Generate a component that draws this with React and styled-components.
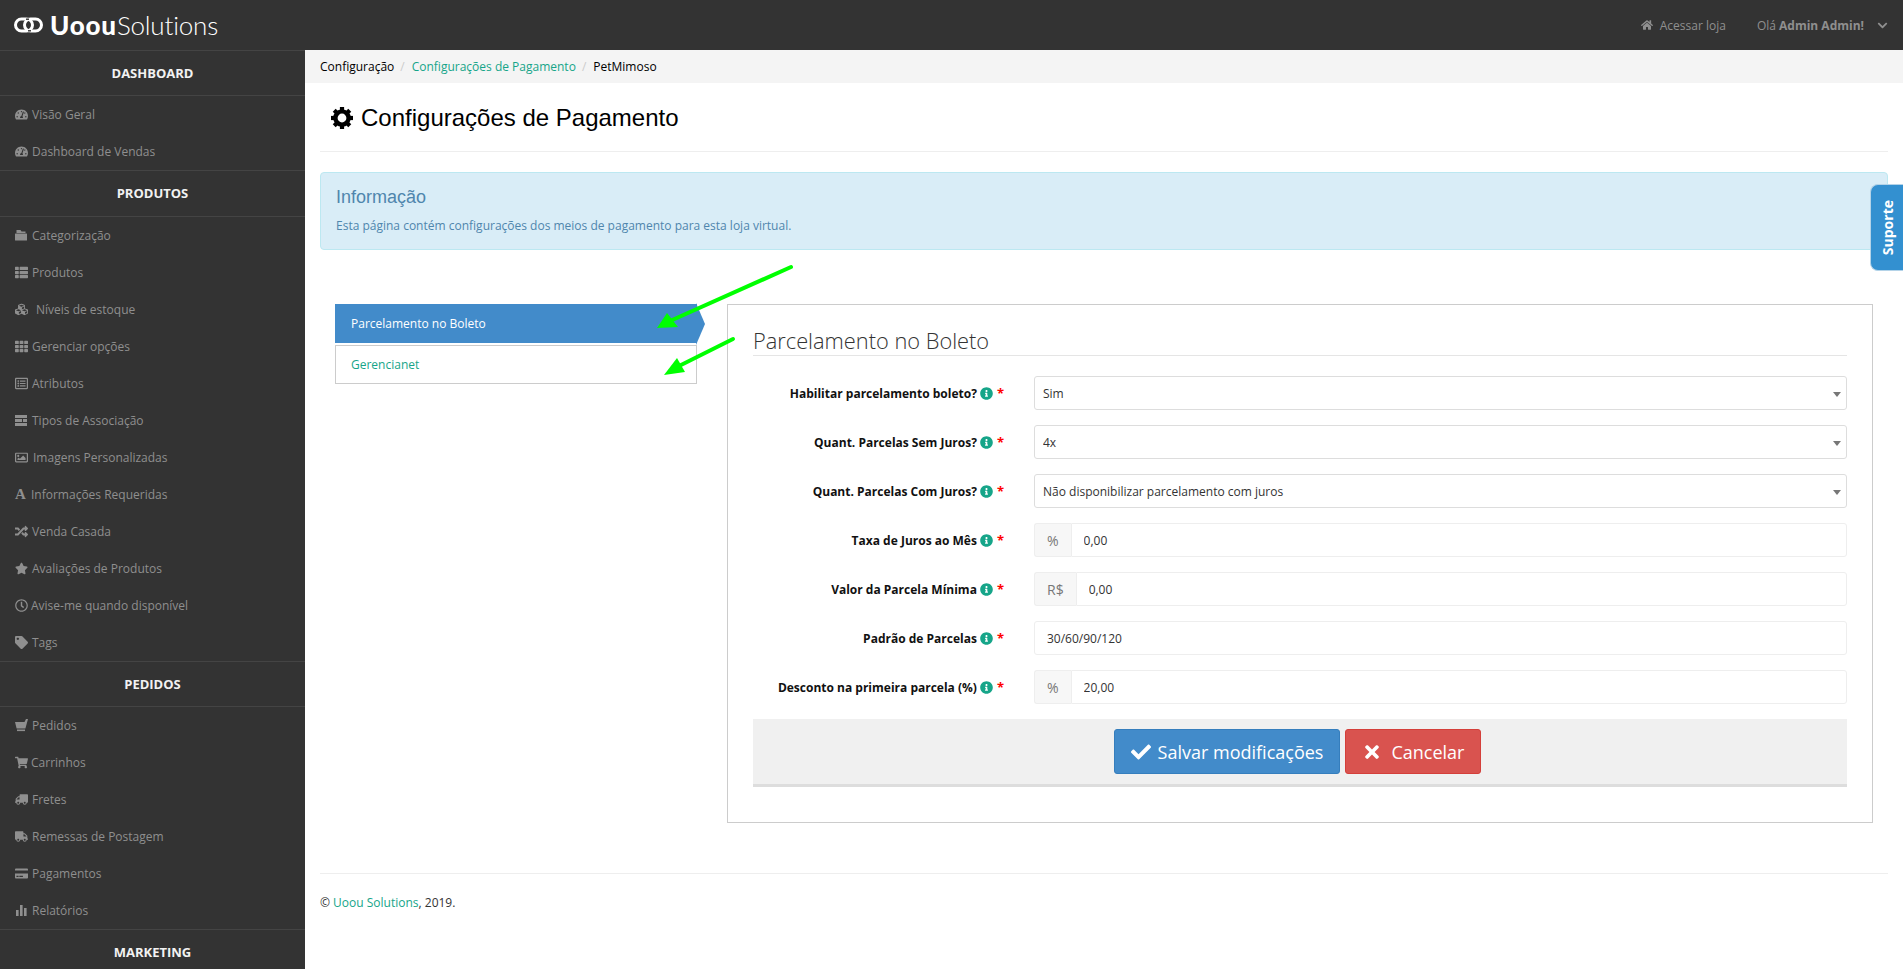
import React from "react";
import styled, { createGlobalStyle } from "styled-components";
import {
  FaTachometerAlt, FaThList, FaCubes, FaTh, FaRegListAlt, FaRegImage, FaRandom,
  FaStar, FaRegClock, FaTag, FaShoppingCart, FaTruck, FaCreditCard, FaHome, FaChevronDown,
  FaCheck, FaTimes, FaInfoCircle
} from "react-icons/fa";

const GlobalStyle = createGlobalStyle`
  html, body { margin: 0; height: 100%; overflow: hidden; background: #fff; }
  body { font-family: "Open Sans", sans-serif; font-size: 12px; color: #333; }
  * { box-sizing: border-box; }
`;

const Page = styled.div`
  position: relative;
  display: flex;
  flex-direction: column;
  height: 100vh;
  overflow: hidden;
`;

const Header = styled.header`
  display: flex;
  align-items: center;
  justify-content: space-between;
  flex: 0 0 50px;
  padding: 0 15px 0 14px;
  background: #333;
`;

const Logo = styled.div`
  display: flex;
  align-items: center;
  color: #fff;
  font-family: Lato, sans-serif;
  font-size: 26px;
  line-height: 50px;
`;

const LogoMark = styled.svg`
  width: 29px;
  height: 16px;
  margin-right: 7px;
`;

const LogoBold = styled.span`
  font-weight: 900;
  letter-spacing: 0.8px;
`;

const LogoThin = styled.span`
  font-weight: 300;
  letter-spacing: -0.2px;
`;

const HeaderLinks = styled.div`
  display: flex;
  align-items: center;
  color: #8f8f8f;
  font-size: 12px;
`;

const StoreLink = styled.span`
  display: flex;
  align-items: center;
  gap: 7px;
  margin-right: 31px;
`;

const UserMenu = styled.span`
  display: flex;
  align-items: center;
  gap: 13px;

  b { font-weight: 700; }
`;

const Body = styled.div`
  display: flex;
  flex: 1;
  min-height: 0;
`;

const Sidebar = styled.nav`
  flex: 0 0 305px;
  background: #333;
  overflow: hidden;
`;

const SectionHead = styled.div`
  display: flex;
  align-items: center;
  justify-content: center;
  height: 46.34px;
  border-top: 1px solid #444;
  border-bottom: 1px solid #444;
  color: #f2f2f2;
  font-size: 13px;
  font-weight: 700;
  text-transform: uppercase;
`;

const SideItem = styled.a`
  display: flex;
  align-items: center;
  height: 37px;
  padding-left: 15px;
  color: #8f8f8f;
  font-size: 12px;
`;

const SideIcon = styled.span`
  display: flex;
  align-items: center;
  flex: 0 0 ${({ $w }) => $w}px;
  margin-right: 3px;
  font-size: 13px;
`;

const SerifGlyph = styled.span`
  font-family: "Liberation Serif", serif;
  font-size: 15px;
  font-weight: 700;
  line-height: 1;
`;

const Main = styled.main`
  flex: 1;
  min-width: 0;
`;

const Breadcrumb = styled.div`
  display: flex;
  align-items: center;
  height: 33px;
  padding-left: 15px;
  background: #f4f4f4;
  color: #000;
  font-size: 12px;
`;

const Slash = styled.span`
  margin: 0 7px 0 6px;
  color: #ccc;
`;

const Link = styled.a`
  color: #16a589;
`;

const Content = styled.div`
  padding: 0 15px;
`;

const PageTitle = styled.h1`
  display: flex;
  align-items: center;
  gap: 8px;
  height: 69px;
  margin: 0;
  padding: 2px 0 0 11px;
  border-bottom: 1px solid #eee;
  color: #000;
  font-family: "Liberation Sans", sans-serif;
  font-size: 24px;
  font-weight: 400;
`;

const Alert = styled.div`
  height: 78px;
  margin-top: 20px;
  padding: 14px 15px;
  border: 1px solid #bce8f1;
  border-radius: 4px;
  background: #d9edf7;
  color: #4f86ad;
`;

const AlertTitle = styled.div`
  font-family: "Liberation Sans", sans-serif;
  font-size: 18px;
  line-height: 20px;
  margin-bottom: 10px;
`;

const Columns = styled.div`
  display: flex;
  align-items: flex-start;
  margin-top: 54px;
  padding: 0 15px;
`;

const Tabs = styled.div`
  display: flex;
  flex-direction: column;
  gap: 2px;
  flex: 0 0 362px;
  margin-right: 30px;
`;

const Tab = styled.a`
  position: relative;
  display: flex;
  align-items: center;
  height: 39px;
  padding-left: 15px;
  border: 1px solid ${({ $active }) => ($active ? "#428bca" : "#ccc")};
  background: ${({ $active }) => ($active ? "#428bca" : "#fff")};
  color: ${({ $active }) => ($active ? "#fff" : "#16a589")};
  font-size: 12px;

  ${({ $active }) =>
    $active &&
    `&::after {
      content: "";
      position: absolute;
      top: -2px;
      left: 100%;
      border-left: 9px solid #428bca;
      border-top: 21px solid transparent;
      border-bottom: 21px solid transparent;
    }`}
`;

const Panel = styled.section`
  flex: 0 0 1146px;
  height: 519px;
  padding: 25px 25px 0;
  border: 1px solid #ccc;
`;

const PanelTitle = styled.h2`
  height: 26px;
  margin: 0 0 20px;
  border-bottom: 1px solid #e5e5e5;
  color: #333;
  font-size: 21.8px;
  font-weight: 300;
  line-height: 22px;
`;

const Row = styled.div`
  display: grid;
  grid-template-columns: 251px 1fr;
  column-gap: 30px;
  align-items: center;
  height: 34px;
  margin-bottom: 15px;
`;

const Label = styled.label`
  display: flex;
  align-items: center;
  justify-content: flex-end;
  color: #111;
  font-size: 12px;
  font-weight: 700;
`;

const Info = styled.span`
  display: flex;
  margin: 0 4px 0 3px;
  color: #16a589;
  font-size: 13px;
`;

const Star = styled.span`
  color: #f00;
  font-size: 13px;
`;

const SelectWrap = styled.div`
  position: relative;
  height: 34px;

  &::after {
    content: "";
    position: absolute;
    top: 16px;
    right: 6px;
    border-top: 5px solid #777;
    border-left: 4px solid transparent;
    border-right: 4px solid transparent;
  }
`;

const Select = styled.select`
  width: 100%;
  height: 34px;
  padding: 0 8px;
  border: 1px solid #ddd;
  border-radius: 3px;
  background: #fff;
  color: #333;
  font-family: "Open Sans", sans-serif;
  font-size: 12px;
  appearance: none;
`;

const InputGroup = styled.div`
  display: flex;
  height: 34px;
`;

const Addon = styled.span`
  display: flex;
  align-items: center;
  padding: 0 12px;
  border: 1px solid #eee;
  border-right: 0;
  border-radius: 3px 0 0 3px;
  background: #f7f7f7;
  color: #777;
  font-size: 14px;
`;

const Input = styled.input`
  flex: 1;
  min-width: 0;
  padding: 0 12px;
  border: 1px solid #eee;
  border-radius: ${({ $joined }) => ($joined ? "0 3px 3px 0" : "3px")};
  color: #333;
  font-family: "Open Sans", sans-serif;
  font-size: 12px;
`;

const Actions = styled.div`
  display: flex;
  justify-content: center;
  gap: 5px;
  height: 68px;
  padding: 10px 5px 0 0;
  border-bottom: 3px solid #ddd;
  background: #f0f0f0;
`;

const Button = styled.button`
  display: flex;
  align-items: center;
  gap: ${({ $danger }) => ($danger ? 9 : 7)}px;
  height: 45px;
  padding: 0 16px;
  border: 1px solid ${({ $danger }) => ($danger ? "#d43f3a" : "#357ebd")};
  border-radius: 3px;
  background: ${({ $danger }) => ($danger ? "#d9534f" : "#428bca")};
  color: #fff;
  font-family: "Open Sans", sans-serif;
  font-size: 18px;

  svg { width: 20px; height: 20px; }
`;

const Footer = styled.footer`
  margin-top: 50px;
  padding-top: 20px;
  border-top: 1px solid #eee;
  color: #333;
  font-size: 12px;
`;

const SupportTab = styled.div`
  position: absolute;
  top: 184px;
  right: 0;
  display: flex;
  align-items: center;
  justify-content: center;
  width: 33px;
  height: 87px;
  border: 1px solid #b4d3e8;
  border-right: 0;
  border-radius: 8px 0 0 8px;
  background: #3390d0;
  color: #fff;
  font-size: 14px;
  font-weight: 700;
  writing-mode: vertical-rl;

  span { transform: rotate(180deg); }
`;

const ArrowLayer = styled.svg`
  position: absolute;
  top: 0;
  left: 0;
  width: 1903px;
  height: 969px;
  pointer-events: none;
`;

const FolderIcon = () => (
  <svg width="12" height="12" viewBox="0 0 12 12" fill="currentColor">
    <path d="M1.5 1h4l1 1.5h4V4H1.5z" />
    <rect x="0" y="4.6" width="12" height="7" rx="0.5" />
  </svg>
);

const TypesIcon = () => (
  <svg width="12" height="11" viewBox="0 0 12 11" fill="currentColor">
    <rect x="0" y="0" width="12" height="3" />
    <rect x="0" y="4" width="7" height="3" />
    <rect x="8" y="4" width="4" height="3" />
    <rect x="0" y="8" width="12" height="3" />
  </svg>
);

const BasketIcon = () => (
  <svg width="13" height="13" viewBox="0 0 13 13" fill="currentColor">
    <path d="M0 3h9.5l1.5-3h2l-2.6 9.5H1.6z" />
    <rect x="2" y="10.5" width="8" height="1.6" />
  </svg>
);

const BarsIcon = () => (
  <svg width="12" height="12" viewBox="0 0 12 12" fill="currentColor">
    <rect x="1" y="6" width="2.6" height="6" />
    <rect x="5" y="1" width="2.6" height="11" />
    <rect x="9" y="4" width="2.6" height="8" />
  </svg>
);

const GearIcon = () => (
  <svg width="22" height="22" viewBox="0 0 22 22" fill="#000">
    <circle cx="11" cy="11" r="6.6" fill="none" stroke="#000" strokeWidth="4.4" />
    {[0, 45, 90, 135, 180, 225, 270, 315].map(angle => (
      <rect key={angle} x="8.9" y="0" width="4.2" height="5" transform={`rotate(${angle} 11 11)`} />
    ))}
  </svg>
);

const Flipped = styled(FaTruck)`
  transform: scaleX(-1);
`;

const sections = [
  {
    title: "Dashboard",
    items: [
      { icon: <FaTachometerAlt />, w: 14, label: "Visão Geral" },
      { icon: <FaTachometerAlt />, w: 14, label: "Dashboard de Vendas" }
    ]
  },
  {
    title: "Produtos",
    items: [
      { icon: <FolderIcon />, w: 14, label: "Categorização" },
      { icon: <FaThList />, w: 14, label: "Produtos" },
      { icon: <FaCubes />, w: 18, label: "Níveis de estoque" },
      { icon: <FaTh />, w: 14, label: "Gerenciar opções" },
      { icon: <FaRegListAlt />, w: 14, label: "Atributos" },
      { icon: <TypesIcon />, w: 14, label: "Tipos de Associação" },
      { icon: <FaRegImage />, w: 15, label: "Imagens Personalizadas" },
      { icon: <SerifGlyph>A</SerifGlyph>, w: 13, label: "Informações Requeridas" },
      { icon: <FaRandom />, w: 14, label: "Venda Casada" },
      { icon: <FaStar />, w: 14, label: "Avaliações de Produtos" },
      { icon: <FaRegClock />, w: 12, label: "Avise-me quando disponível" },
      { icon: <FaTag />, w: 14, label: "Tags" }
    ]
  },
  {
    title: "Pedidos",
    items: [
      { icon: <BasketIcon />, w: 14, label: "Pedidos" },
      { icon: <FaShoppingCart />, w: 13, label: "Carrinhos" },
      { icon: <Flipped />, w: 14, label: "Fretes" },
      { icon: <FaTruck />, w: 14, label: "Remessas de Postagem" },
      { icon: <FaCreditCard />, w: 14, label: "Pagamentos" },
      { icon: <BarsIcon />, w: 14, label: "Relatórios" }
    ]
  },
  { title: "Marketing", items: [] }
];

const fields = [
  { label: "Habilitar parcelamento boleto?", select: "Sim" },
  { label: "Quant. Parcelas Sem Juros?", select: "4x" },
  { label: "Quant. Parcelas Com Juros?", select: "Não disponibilizar parcelamento com juros" },
  { label: "Taxa de Juros ao Mês", addon: "%", value: "0,00" },
  { label: "Valor da Parcela Mínima", addon: "R$", value: "0,00" },
  { label: "Padrão de Parcelas", value: "30/60/90/120" },
  { label: "Desconto na primeira parcela (%)", addon: "%", value: "20,00" }
];

const Field = ({ select, addon, value }) => {
  if (select) {
    return (
      <SelectWrap>
        <Select defaultValue={select}>
          <option>{select}</option>
        </Select>
      </SelectWrap>
    );
  }
  return (
    <InputGroup>
      {addon && <Addon>{addon}</Addon>}
      <Input $joined={!!addon} defaultValue={value} />
    </InputGroup>
  );
};

const App = () => (
  <Page>
    <GlobalStyle />
    <Header>
      <Logo>
        <LogoMark viewBox="0 0 29 16" fill="none" stroke="#fff" strokeWidth="3">
          <rect x="1.5" y="2" width="17" height="12" rx="6" />
          <rect x="10.5" y="2" width="17" height="12" rx="6" />
          <path d="M12 2.2h3" stroke="#333" strokeWidth="1.4" />
          <path d="M14 13.8h3" stroke="#333" strokeWidth="1.4" />
        </LogoMark>
        <LogoBold>Uoou</LogoBold>
        <LogoThin>Solutions</LogoThin>
      </Logo>
      <HeaderLinks>
        <StoreLink>
          <FaHome size={12} /> Acessar loja
        </StoreLink>
        <UserMenu>
          <span>
            Olá <b>Admin Admin!</b>
          </span>
          <FaChevronDown size={11} />
        </UserMenu>
      </HeaderLinks>
    </Header>
    <Body>
      <Sidebar>
        {sections.map(section => (
          <div key={section.title}>
            <SectionHead>{section.title}</SectionHead>
            {section.items.map(item => (
              <SideItem key={item.label}>
                <SideIcon $w={item.w}>{item.icon}</SideIcon>
                {item.label}
              </SideItem>
            ))}
          </div>
        ))}
      </Sidebar>
      <Main>
        <Breadcrumb>
          Configuração
          <Slash>/</Slash>
          <Link>Configurações de Pagamento</Link>
          <Slash>/</Slash>
          PetMimoso
        </Breadcrumb>
        <Content>
          <PageTitle>
            <GearIcon /> Configurações de Pagamento
          </PageTitle>
          <Alert>
            <AlertTitle>Informação</AlertTitle>
            Esta página contém configurações dos meios de pagamento para esta loja virtual.
          </Alert>
          <Columns>
            <Tabs>
              <Tab $active>Parcelamento no Boleto</Tab>
              <Tab>Gerencianet</Tab>
            </Tabs>
            <Panel>
              <PanelTitle>Parcelamento no Boleto</PanelTitle>
              {fields.map(field => (
                <Row key={field.label}>
                  <Label>
                    {field.label}
                    <Info>
                      <FaInfoCircle />
                    </Info>
                    <Star>*</Star>
                  </Label>
                  <Field {...field} />
                </Row>
              ))}
              <Actions>
                <Button>
                  <FaCheck /> Salvar modificações
                </Button>
                <Button $danger>
                  <FaTimes /> Cancelar
                </Button>
              </Actions>
            </Panel>
          </Columns>
          <Footer>
            © <Link>Uoou Solutions</Link>, 2019.
          </Footer>
        </Content>
      </Main>
    </Body>
    <SupportTab>
      <span>Suporte</span>
    </SupportTab>
    <ArrowLayer viewBox="0 0 1903 969">
      <g stroke="#00ff00" strokeWidth="4" strokeLinecap="round" fill="#00ff00">
        <line x1="791" y1="267" x2="670" y2="321" />
        <line x1="733" y1="339" x2="675" y2="368" />
      </g>
      <g fill="#00ff00">
        <polygon points="657,328 667,313 678,327" />
        <polygon points="664,375 677,358 685,372" />
      </g>
    </ArrowLayer>
  </Page>
);

export default App;
